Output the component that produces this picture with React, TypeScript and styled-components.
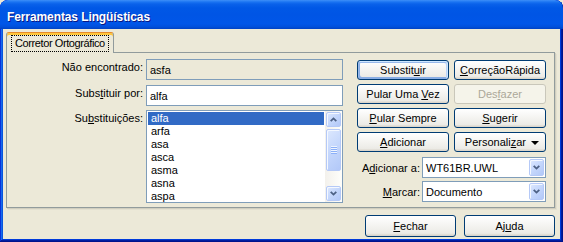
import React from "react";
import styled, { createGlobalStyle, css } from "styled-components";

const Global = createGlobalStyle`
  html, body { margin: 0; padding: 0; background: #ECE9D8; }
  body { font-family: "Liberation Sans", Arial, sans-serif; font-size: 11px; color: #000; }
  * { box-sizing: border-box; }
`;

const Window = styled.div`
  width: 563px;
  height: 242px;
  display: flex;
  flex-direction: column;
  background: #ece9d8;
  padding: 0 3px 3px;
  border-radius: 8px 8px 0 0;
  overflow: hidden;
  box-shadow: inset -1px -1px #00138c, inset 1px 1px #0831d9, inset -2px -2px #001ea0,
    inset 2px 2px #166aee, inset -3px -3px #003bda, inset 3px 3px #0855dd;
`;

const TitleBar = styled.div`
  flex: none;
  height: 29px;
  margin: 0 -3px;
  padding: 10px 7px 0;
  border-radius: 8px 8px 0 0;
  background: linear-gradient(
    180deg,
    #3d8ff8 0px,
    #1a74f2 2px,
    #0a62ea 4px,
    #0058e6 8px,
    #0055e5 50%,
    #0056e8 82%,
    #0050dc 92%,
    #0042c4 100%
  );
`;

const Title = styled.div`
  color: #fff;
  font-family: "Liberation Sans", Arial, sans-serif;
  font-weight: bold;
  font-size: 12px;
  line-height: 14px;
  letter-spacing: -0.1px;
  text-shadow: 1px 1px #0a1883;
`;

const Body = styled.div`
  flex: 1;
  display: flex;
  flex-direction: column;
  padding: 3px 5px 0 3px;
`;

const TabStrip = styled.div`
  display: flex;
  position: relative;
  z-index: 1;
  margin-bottom: -1px;
`;

const Tab = styled.div`
  width: 108px;
  height: 21px;
  background: #ece9d8;
  border: 1px solid #919b9c;
  border-top: 1px solid #e68b2c;
  border-bottom: none;
  border-radius: 3px 3px 0 0;
  box-shadow: inset 0 2px #ffc73c;
  padding: 2px 0 0 4px;
`;

const TabLabel = styled.span`
  display: inline-block;
  border: 1px dotted #000;
  padding: 1px 3px 1px 3px;
  line-height: 13px;
  letter-spacing: -0.4px;
  white-space: nowrap;
`;

const Panel = styled.div`
  height: 156px;
  flex: none;
  border: 1px solid #919b9c;
  background: #ece9d8;
  box-shadow: 1px 1px 0 #d0cebf, 2px 2px 0 #e3e0d0;
  display: flex;
  align-items: flex-start;
  padding-top: 6px;
`;

const Form = styled.div`
  display: grid;
  grid-template-columns: 136px 197px;
  grid-template-rows: 26px 25px 93px;
  column-gap: 3px;
`;

const Label = styled.label`
  text-align: right;
  line-height: 13px;
  padding-top: 2px;
  white-space: nowrap;
`;

const Field = styled.div<{ $readonly?: boolean }>`
  height: 21px;
  border: 1px solid #7f9db9;
  background: ${(p) => (p.$readonly ? "#ece9d8" : "#fff")};
  display: flex;
  align-items: center;
  padding-left: 3px;
`;

const ListBox = styled.div`
  height: 93px;
  border: 1px solid #7f9db9;
  background: #fff;
  display: flex;
  overflow: hidden;
`;

const Items = styled.div`
  flex: 1;
  padding: 1px;
  overflow: hidden;
`;

const Item = styled.div<{ $selected?: boolean }>`
  height: 13px;
  line-height: 13px;
  padding-left: 3px;
  white-space: nowrap;
  ${(p) =>
    p.$selected &&
    css`
      background: #316ac5;
      color: #fff;
    `}
`;

const ScrollBar = styled.div`
  width: 17px;
  flex: none;
  display: flex;
  flex-direction: column;
  background: linear-gradient(90deg, #f3f1ec, #fefefb);
`;

const ScrollTrack = styled.div`
  flex: 1;
  padding: 1px;
`;

const blueKnob = css`
  border: 1px solid #b5c9f7;
  border-radius: 2px;
  background: linear-gradient(135deg, #dde8fe 0%, #c6d8fc 45%, #b2c8f8 100%);
  box-shadow: inset 1px 1px #f4f8ff;
  display: flex;
  align-items: center;
  justify-content: center;
`;

const ScrollButton = styled.div`
  height: 17px;
  padding: 1px;
  flex: none;
  & > div {
    ${blueKnob};
    height: 100%;
  }
`;

const Thumb = styled.div`
  ${blueKnob};
  height: 42px;
  flex-direction: column;
  gap: 1px;
`;

const Grip = styled.span`
  display: block;
  width: 6px;
  height: 1px;
  background: #8cb0f8;
  box-shadow: 0 -1px #eef4fe;
`;

const Right = styled.div`
  margin-left: 14px;
  margin-top: 1px;
  display: flex;
  flex-direction: column;
`;

const ButtonGrid = styled.div`
  display: grid;
  grid-template-columns: 92px 92px;
  grid-auto-rows: 20px;
  column-gap: 5px;
  row-gap: 4px;
`;

const Button = styled.button<{ $default?: boolean; $menu?: boolean }>`
  font-family: "Liberation Sans", Arial, sans-serif;
  font-size: 11px;
  color: #000;
  padding: 0;
  margin: 0;
  border: 1px solid #003c74;
  border-radius: 3px;
  background: linear-gradient(180deg, #fff, #ecebe6 86%, #d6d0c5);
  display: flex;
  align-items: center;
  justify-content: center;
  gap: 5px;
  white-space: nowrap;
  ${(p) =>
    p.$default &&
    css`
      box-shadow: inset -1px 1px #cee7ff, inset 1px 2px #98b8ea, inset -2px 2px #bcd4f6,
        inset 1px -1px #89ade4, inset 2px -2px #89ade4;
    `}
  ${(p) =>
    p.$menu &&
    css`
      justify-content: flex-end;
      padding-right: 6px;
    `}
  &:disabled {
    color: #aca899;
    border-color: #c9c7ba;
    background: #f5f4ea;
  }
`;

const Caret = styled.span`
  width: 0;
  height: 0;
  border-left: 4px solid transparent;
  border-right: 4px solid transparent;
  border-top: 4px solid #000;
  margin-top: 1px;
`;

const ComboGrid = styled.div`
  margin-top: 5px;
  display: grid;
  grid-template-columns: 1fr 124px;
  grid-auto-rows: 21px;
  column-gap: 2px;
  row-gap: 3px;
`;

const ComboLabel = styled.label`
  text-align: right;
  align-self: center;
  white-space: nowrap;
`;

const Combo = styled.div`
  border: 1px solid #7f9db9;
  background: #fff;
  display: flex;
  align-items: center;
  padding-left: 3px;
`;

const ComboText = styled.span`
  flex: 1;
`;

const ComboButton = styled.div`
  ${blueKnob};
  width: 15px;
  height: 17px;
  margin-right: 1px;
`;

const Footer = styled.div`
  margin-top: 7px;
  display: flex;
  justify-content: flex-end;
  gap: 8px;
`;

const FooterButton = styled(Button)`
  width: 91px;
  height: 22px;
`;

const Mn = styled.span`
  text-decoration: underline;
`;

const Chevron = ({ up }: { up?: boolean }) => (
  <svg width="7" height="5" viewBox="0 0 7 5">
    <polyline
      points={up ? "0.7,4.2 3.5,1.4 6.3,4.2" : "0.7,0.8 3.5,3.6 6.3,0.8"}
      fill="none"
      stroke="#4d6185"
      strokeWidth="1.8"
    />
  </svg>
);

const words = ["alfa", "arfa", "asa", "asca", "asma", "asna", "aspa"];

export default function App() {
  return (
    <>
      <Global />
      <Window>
        <TitleBar>
          <Title>Ferramentas Lingüísticas</Title>
        </TitleBar>
        <Body>
          <TabStrip>
            <Tab>
              <TabLabel>Corretor Ortográfico</TabLabel>
            </Tab>
          </TabStrip>
          <Panel>
            <Form>
              <Label>Não encontrado:</Label>
              <Field $readonly>asfa</Field>
              <Label>
                Subs<Mn>t</Mn>ituir por:
              </Label>
              <Field>alfa</Field>
              <Label>
                Su<Mn>b</Mn>stituições:
              </Label>
              <ListBox>
                <Items>
                  {words.map((w, i) => (
                    <Item key={w} $selected={i === 0}>
                      {w}
                    </Item>
                  ))}
                </Items>
                <ScrollBar>
                  <ScrollButton>
                    <div>
                      <Chevron up />
                    </div>
                  </ScrollButton>
                  <ScrollTrack>
                    <Thumb>
                      <Grip />
                      <Grip />
                      <Grip />
                      <Grip />
                    </Thumb>
                  </ScrollTrack>
                  <ScrollButton>
                    <div>
                      <Chevron />
                    </div>
                  </ScrollButton>
                </ScrollBar>
              </ListBox>
            </Form>
            <Right>
              <ButtonGrid>
                <Button $default>
                  <span>
                    Substit<Mn>u</Mn>ir
                  </span>
                </Button>
                <Button>
                  <span>
                    <Mn>C</Mn>orreçãoRápida
                  </span>
                </Button>
                <Button>
                  <span>
                    Pular Uma <Mn>V</Mn>ez
                  </span>
                </Button>
                <Button disabled>
                  <span>
                    Des<Mn>f</Mn>azer
                  </span>
                </Button>
                <Button>
                  <span>
                    <Mn>P</Mn>ular Sempre
                  </span>
                </Button>
                <Button>
                  <span>
                    <Mn>S</Mn>ugerir
                  </span>
                </Button>
                <Button>
                  <span>
                    <Mn>A</Mn>dicionar
                  </span>
                </Button>
                <Button $menu>
                  <span>
                    Personali<Mn>z</Mn>ar
                  </span>
                  <Caret />
                </Button>
              </ButtonGrid>
              <ComboGrid>
                <ComboLabel>
                  A<Mn>d</Mn>icionar a:
                </ComboLabel>
                <Combo>
                  <ComboText>WT61BR.UWL</ComboText>
                  <ComboButton>
                    <Chevron />
                  </ComboButton>
                </Combo>
                <ComboLabel>
                  <Mn>M</Mn>arcar:
                </ComboLabel>
                <Combo>
                  <ComboText>Documento</ComboText>
                  <ComboButton>
                    <Chevron />
                  </ComboButton>
                </Combo>
              </ComboGrid>
            </Right>
          </Panel>
          <Footer>
            <FooterButton>
              <span>
                <Mn>F</Mn>echar
              </span>
            </FooterButton>
            <FooterButton>
              <span>
                Aj<Mn>u</Mn>da
              </span>
            </FooterButton>
          </Footer>
        </Body>
      </Window>
    </>
  );
}
